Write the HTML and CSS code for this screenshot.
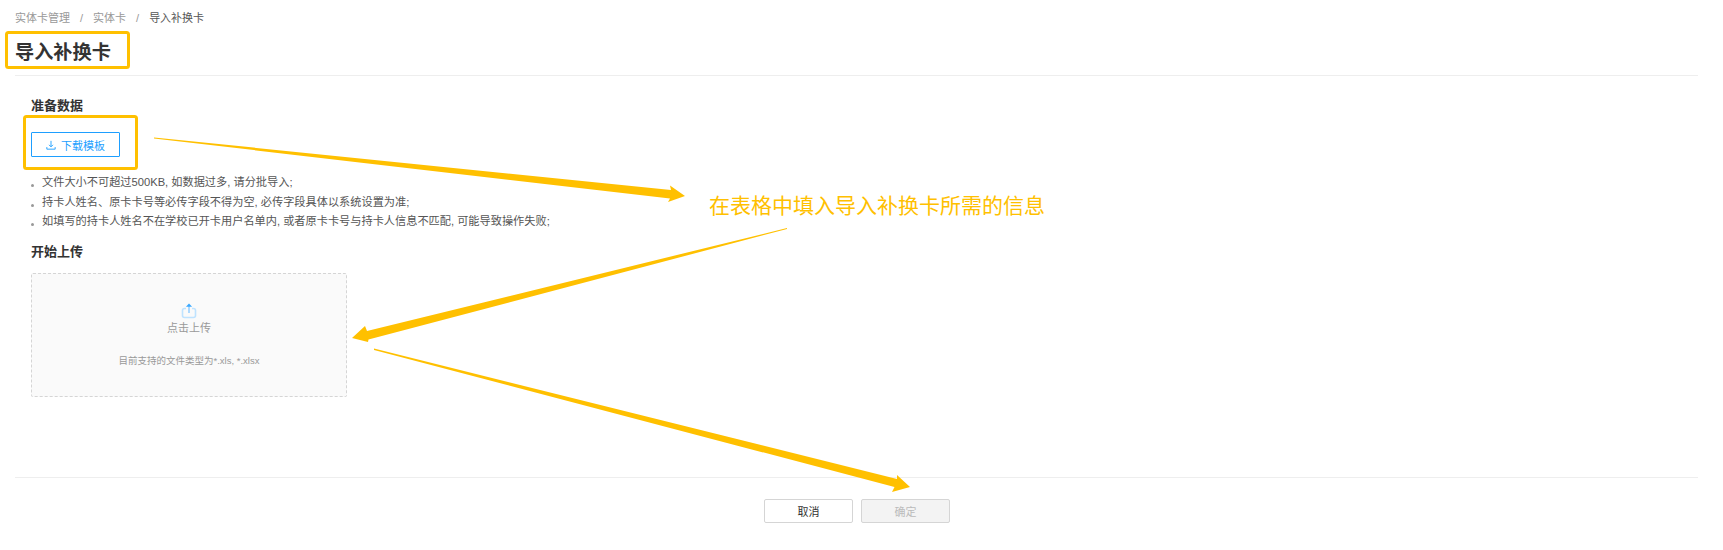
FILE: index.html
```html
<!DOCTYPE html>
<html>
<head>
  <meta charset="utf-8">
  <title>导入补换卡</title>
  <link rel="stylesheet" href="styles.css">
</head>
<body>
  <div class="page">
    <header class="page-head">
      <div class="breadcrumb">
        <span>实体卡管理</span><i>/</i><span>实体卡</span><i>/</i><span class="current">导入补换卡</span>
      </div>
      <h1>导入补换卡</h1>
    </header>

    <main class="content">
      <h2>准备数据</h2>
      <button class="download-btn">
        <svg width="10" height="10" viewBox="0 0 12 12" fill="none" stroke="#1e9fff" stroke-width="1.1">
          <path d="M6 1v7M3.6 5.8 6 8.2l2.4-2.4M1 8.5v2.5h10V8.5"/>
        </svg>
        下载模板
      </button>
      <ul class="tips">
        <li>文件大小不可超过500KB, 如数据过多, 请分批导入;</li>
        <li>持卡人姓名、原卡卡号等必传字段不得为空, 必传字段具体以系统设置为准;</li>
        <li>如填写的持卡人姓名不在学校已开卡用户名单内, 或者原卡卡号与持卡人信息不匹配, 可能导致操作失败;</li>
      </ul>
      <h2 class="upload-title">开始上传</h2>
      <div class="upload-box">
        <svg width="16" height="16" viewBox="0 0 16 16" fill="none">
          <path d="M5 5.5H3.5a2 2 0 0 0-2 2v5a2 2 0 0 0 2 2h9a2 2 0 0 0 2-2v-5a2 2 0 0 0-2-2H11" stroke="#bfe3ff" stroke-width="1.6"/>
          <path d="M8 10V2" stroke="#8ccbff" stroke-width="1.4"/>
          <path d="M8 .6 4.9 3.8h6.2z" fill="#3aa8ff"/>
        </svg>
        <p class="upload-label">点击上传</p>
        <p class="upload-hint">目前支持的文件类型为*.xls, *.xlsx</p>
      </div>
    </main>

    <footer class="page-foot">
      <button class="btn">取消</button>
      <button class="btn btn-disabled">确定</button>
    </footer>

    <!-- annotations drawn on top of the screenshot -->
    <svg class="marks" width="1723" height="550" viewBox="0 0 1723 550">
      <g fill="none" stroke="#ffc000" stroke-width="3">
        <rect x="6.5" y="32.5" width="122" height="35" rx="2"/>
        <rect x="24.5" y="116.5" width="112" height="52" rx="2"/>
      </g>
      <g fill="#ffc000">
        <path d="M154 137.5 671 190 670 185.5 685 196 668 202 670 198.5 154 138.5z"/>
        <path d="M787 228 367 331 365 326 352 338 368 342 368.5 339.5 787 229z"/>
        <path d="M374 348.5 897 479 897 475 910 487 892 492 894.5 487 374 350z"/>
      </g>
    </svg>
    <div class="note">在表格中填入导入补换卡所需的信息</div>
  </div>
</body>
</html>
```

FILE: styles.css
```css
/* Page */
* {
  box-sizing: border-box;
}

body {
  margin: 0;
  background-color: #fff;
  font-family: "Liberation Sans", "Noto Sans CJK SC", sans-serif;
  color: #333;
}

.page {
  position: relative;
  width: 1723px;
  height: 550px;
  overflow: hidden;
}

/* Header */
.page-head {
  margin: 0 25px 0 15px;
  height: 76px;
  padding-top: 11px;
  border-bottom: 1px solid #eee;
}

.breadcrumb {
  display: flex;
  font-size: 11px;
  line-height: 15px;
  color: #999;
}

.breadcrumb i {
  margin: 0 10px;
  font-style: normal;
}

.breadcrumb .current {
  color: #555;
}

h1 {
  margin: 14px 0 0;
  font-size: 19.2px;
  line-height: 26px;
  font-weight: 700;
  color: #333;
}

/* Content */
.content {
  height: 402px;
  margin: 0 25px 0 15px;
  padding: 21px 0 0 16px;
  border-bottom: 1px solid #eee;
}

h2 {
  margin: 0;
  font-size: 13px;
  line-height: 18px;
  font-weight: 700;
  color: #333;
}

.download-btn {
  display: flex;
  align-items: center;
  justify-content: center;
  gap: 5px;
  width: 89px;
  height: 25px;
  margin-top: 17px;
  padding: 0;
  background: #fff;
  border: 1px solid #1e9fff;
  border-radius: 1px;
  font: inherit;
  font-size: 11px;
  color: #1e9fff;
}

.tips {
  margin: 16px 0 0;
  padding: 0 0 0 6px;
  list-style: none;
  font-size: 11.2px;
  line-height: 19.5px;
  color: #555;
}

.tips li::before {
  content: "";
  display: inline-block;
  width: 3px;
  height: 3px;
  margin: 0 8px 0 -6px;
  background: #999;
  border-radius: 50%;
  vertical-align: -1px;
}

.upload-title {
  margin-top: 11px;
}

.upload-box {
  display: flex;
  flex-direction: column;
  align-items: center;
  width: 316px;
  height: 124px;
  margin-top: 12px;
  padding-top: 29px;
  background: #fafafa;
  border: 1px dashed #d5d5d5;
  border-radius: 2px;
}

.upload-box p {
  margin: 0;
  font-size: 11px;
  line-height: 16px;
  color: #999;
}

.upload-label {
  padding-top: 1px;
}

.upload-box .upload-hint {
  margin-top: 17px;
  font-size: 9.5px;
}

/* Footer */
.page-foot {
  display: flex;
  justify-content: center;
  gap: 8px;
  padding: 21px 24px 0 0;
  margin-left: 15px;
}

.btn {
  width: 89px;
  height: 24px;
  padding: 0;
  background: #fff;
  border: 1px solid #d5d5d5;
  border-radius: 2px;
  font: inherit;
  font-size: 11px;
  color: #333;
}

.btn-disabled {
  background: #f3f3f3;
  color: #bbb;
}

/* Annotations */
.marks {
  position: absolute;
  top: 0;
  left: 0;
}

.note {
  position: absolute;
  top: 193px;
  left: 709px;
  font-size: 21px;
  line-height: 26px;
  color: #ffc000;
}
```
